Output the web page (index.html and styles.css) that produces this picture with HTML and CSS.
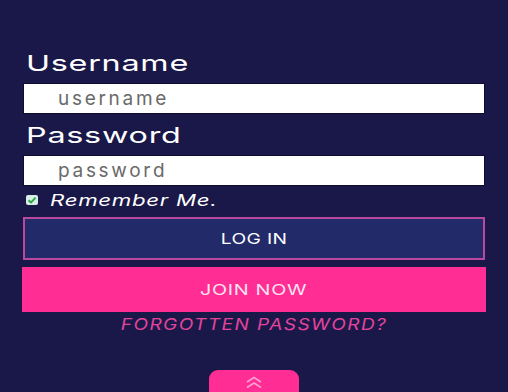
FILE: index.html
```html
<!DOCTYPE html>
<html>
<head>
<meta charset="utf-8">
<link rel="stylesheet" href="styles.css">
</head>
<body>
<main class="page">
  <form class="login">
    <label class="label" for="u">Username</label>
    <input class="field" id="u" type="text" placeholder="username">
    <label class="label label-pw" for="p">Password</label>
    <input class="field" id="p" type="password" placeholder="password">
    <div class="remember">
      <span class="check">
        <svg viewBox="0 0 12 10" width="12" height="10"><path d="M2.5 5.2 L5 7.4 L9.6 2.6" fill="none" stroke="#27a844" stroke-width="1.8"/></svg>
      </span>
      <span class="remember-text">Remember Me.</span>
    </div>
    <button type="button" class="btn btn-login"><span class="btn-text">LOG IN</span></button>
    <button type="button" class="btn btn-join"><span class="btn-text">JOIN NOW</span></button>
    <a class="forgot" href="#">FORGOTTEN PASSWORD?</a>
  </form>
  <div class="totop-wrap">
    <div class="totop">
      <svg viewBox="0 0 22 14" width="22" height="14"><path d="M4 7 L11 2.5 L18 7 M4 12.5 L11 8 L18 12.5" fill="none" stroke="#ffa3d1" stroke-width="1.5"/></svg>
    </div>
  </div>
</main>
</body>
</html>
```

FILE: styles.css
```css
html, body {
  margin: 0;
  padding: 0;
  background: #1a1848;
  height: 100%;
  overflow: hidden;
}
.page {
  font-family: Inter, "Open Sans", sans-serif;
  padding: 48px 23px 0 23px;
}
.login {
  display: flex;
  flex-direction: column;
}
.label {
  align-self: flex-start;
  color: #ffffff;
  font-size: 22px;
  line-height: 30px;
  margin-left: 3px;
  margin-bottom: 5px;
  letter-spacing: 0.5px;
  transform: scaleX(1.47);
  transform-origin: left center;
}
.label-pw {
  margin-top: 6px;
}
.field {
  box-sizing: border-box;
  height: 31px;
  width: 100%;
  border: 1px solid #0e0c30;
  background: #ffffff;
  padding: 0 0 0 34px;
  font-family: Inter, sans-serif;
  font-size: 19px;
  color: #555;
  outline: none;
}
.field::placeholder {
  color: #6a6a6a;
  letter-spacing: 2.7px;
}
.remember {
  display: flex;
  align-items: center;
  margin-top: 6px;
  height: 16px;
}
.check {
  width: 12px;
  height: 10px;
  background: #d9efe6;
  border-radius: 2px;
  margin-left: 3px;
  display: flex;
}
.remember-text {
  color: #ffffff;
  font-style: italic;
  font-size: 16px;
  margin-left: 12px;
  letter-spacing: 0.5px;
  transform: scaleX(1.39);
  transform-origin: left center;
}
.btn {
  width: 100%;
  box-sizing: border-box;
  font-family: Inter, sans-serif;
  font-size: 15px;
  color: #ffffff;
  letter-spacing: 0.3px;
  cursor: pointer;
}
.btn-text {
  display: inline-block;
  transform: scaleX(1.28);
}
.btn-login {
  margin-top: 9px;
  height: 43px;
  background: #232a6a;
  border: 2px solid #bb489f;
}
.btn-join {
  margin-top: 7px;
  height: 45px;
  width: calc(100% + 2px);
  margin-left: -1px;
  background: #ff2d94;
  border: none;
  color: #fbe3ef;
}
.btn-join .btn-text {
  transform: scaleX(1.32);
  letter-spacing: 0.5px;
}
.forgot {
  align-self: center;
  color: #e2449c;
  font-style: italic;
  font-size: 16px;
  letter-spacing: 1.2px;
  text-decoration: none;
  margin-top: 2px;
  transform: scaleX(1.19);
}
.totop-wrap {
  display: flex;
  justify-content: center;
  margin-top: 36px;
}
.totop {
  width: 90px;
  height: 40px;
  background: #ff2d94;
  border-radius: 9px;
  display: flex;
  justify-content: center;
  padding-top: 5px;
  box-sizing: border-box;
}
```
